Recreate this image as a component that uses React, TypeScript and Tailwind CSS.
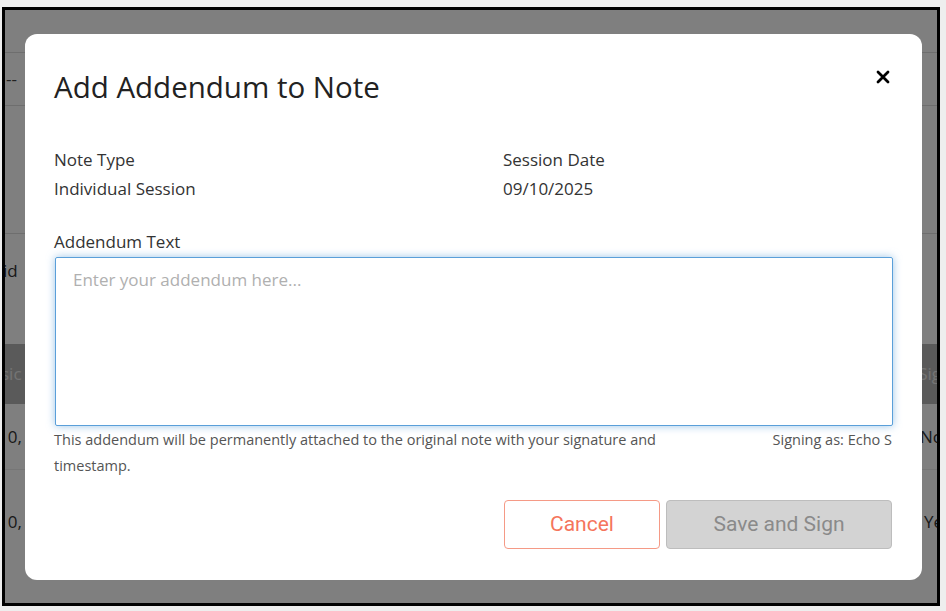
import { useState } from 'react';

const bodyFont = { fontFamily: '"Open Sans", "Noto Sans", sans-serif' };

function BackgroundPage() {
  // faint table page behind the dialog overlay
  return (
    <div className="flex flex-col w-full text-[#333] text-[17px]" style={bodyFont}>
      <div className="h-[43px] border-b border-[#dcdcdc]" />
      <div className="h-[53px] border-b border-[#dcdcdc] flex items-center pl-[1px] text-[#444]">--</div>
      <div className="h-[128px] border-b border-[#dcdcdc]" />
      <div className="h-[110px] flex items-center justify-between pb-[36px]">
        <span className="-ml-[2px]">id</span>
        <span />
      </div>
      <div className="h-[60px] bg-[#b4b4b4] text-[#e8e8e8] flex items-center justify-between">
        <span className="-ml-[4px]">sic</span>
        <span className="mr-[-4px]">Sig</span>
      </div>
      <div className="h-[66px] border-b border-[#ececec] flex items-center justify-between">
        <span className="-ml-[7px]">10,</span>
        <span className="mr-[-6px]">No</span>
      </div>
      <div className="h-[104px] flex items-center justify-between">
        <span className="-ml-[7px]">10,</span>
        <span className="mr-[-6px]">Ye</span>
      </div>
      <div className="pl-[272px] -mt-[38px] text-[15px]">Friends...</div>
    </div>
  );
}

export default function App() {
  const [text, setText] = useState('');

  return (
    <div className="w-[946px] h-[611px] bg-[#eeeeee] pt-[7px] pl-[2px]">
      <div className="relative w-[938px] h-[599px] border-[3px] border-black bg-white overflow-hidden">
        <BackgroundPage />
        <div className="absolute inset-0 bg-black/50 pl-[20px] pt-[24px]">
          <div
            className="w-[897px] h-[546px] bg-white rounded-[12px] pl-[29px] pr-[30px] pt-[35px] flex flex-col"
            style={bodyFont}
          >
            <div className="flex items-start justify-between">
              <h2 className="text-[29.5px] leading-[36px] text-[#222]">Add Addendum to Note</h2>
              <button className="mt-[1px] mr-[2px] w-[14px] h-[14px] text-black">
                <svg width="14" height="14" viewBox="0 0 14 14" fill="none" stroke="currentColor" strokeWidth="2.8" strokeLinecap="round">
                  <path d="M2 2L12 12M12 2L2 12" />
                </svg>
              </button>
            </div>

            <div className="grid grid-cols-2 gap-x-[60px] mt-[40px] text-[17px] leading-[29px] text-[#333]">
              <div>
                <div>Note Type</div>
                <div>Individual Session</div>
              </div>
              <div>
                <div>Session Date</div>
                <div>09/10/2025</div>
              </div>
            </div>

            <label className="mt-[27px] text-[17px] leading-[24px] text-[#333]">Addendum Text</label>
            <textarea
              autoFocus
              value={text}
              onChange={(e) => setText(e.target.value)}
              placeholder="Enter your addendum here..."
              className="mt-[3px] ml-[1px] h-[169px] w-full resize-none rounded-[2px] border border-[#5a9fd9] px-[17px] py-[10px] text-[17px] leading-[24px] text-[#333] placeholder:text-[#b0b0b0] outline-none shadow-[0_0_8px_rgba(90,159,217,0.6)] caret-[#555]"
            />

            <div className="flex items-start justify-between mt-[1px] text-[14.5px] leading-[26px] text-[#555]">
              <p className="w-[640px]">
                This addendum will be permanently attached to the original note with your signature and timestamp.
              </p>
              <span className="shrink-0">Signing as: Echo S</span>
            </div>

            <div className="flex justify-end gap-[6px] mt-[21px]" style={{ fontFamily: 'Roboto, sans-serif' }}>
              <button className="w-[156px] h-[49px] rounded-[4px] border border-[#f59a86] text-[#f5755c] text-[21px] bg-white">
                Cancel
              </button>
              <button
                disabled
                className="w-[226px] h-[49px] rounded-[4px] border border-[#bdbdbd] bg-[#d3d3d3] text-[#8a8a8a] text-[21px]"
              >
                Save and Sign
              </button>
            </div>
          </div>
        </div>
      </div>
    </div>
  );
}
